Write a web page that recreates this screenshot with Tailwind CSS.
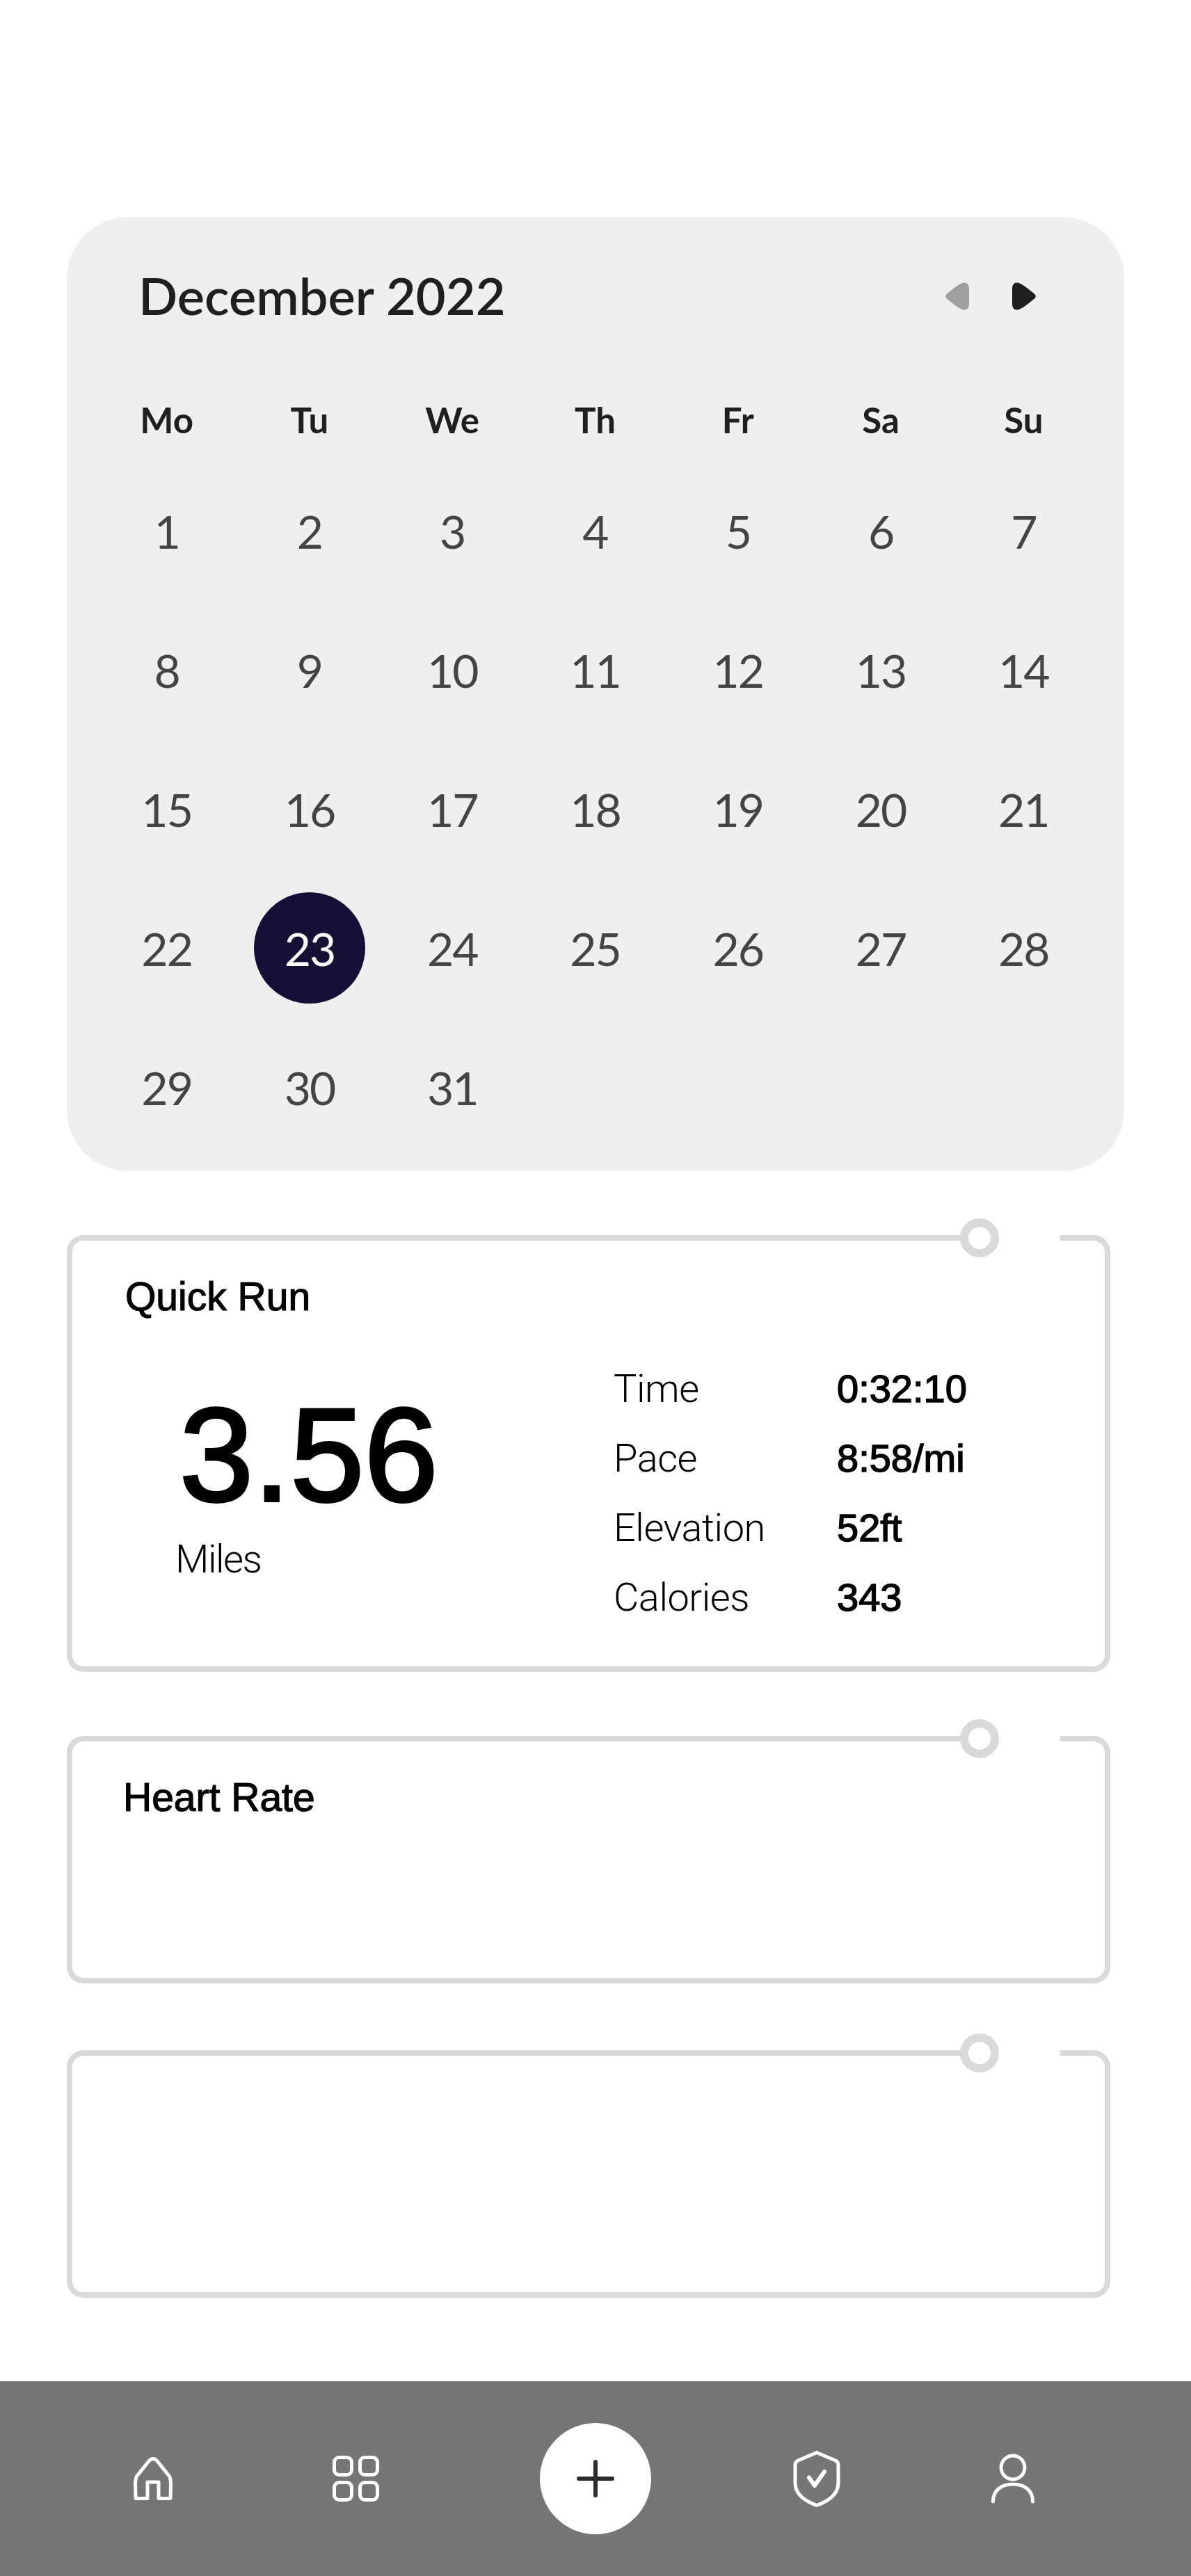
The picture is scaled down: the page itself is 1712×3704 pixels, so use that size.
<!DOCTYPE html>
<html lang="en">
<head>
    <meta charset="UTF-8">
    <meta name="viewport" content="width=device-width, initial-scale=1.0">
    <title>Calendar</title>
    <script src="https://cdn.jsdelivr.net/npm/@tailwindcss/browser@4"></script>
</head>
<body class="bg-white h-[3704px] w-[1712px] overflow-hidden flex flex-col font-['Liberation_Sans',sans-serif]">
    <main class="flex-1 pt-[312px] pl-[96px]">
        <!-- calendar -->
        <section class="w-[1520px] h-[1372px] bg-[#efefef] rounded-[88px] pl-[41px] pr-[42px] font-['Lato',sans-serif]">
            <div class="h-[226px] pt-[70px] flex items-start justify-between">
                <h2 class="pl-[62px] h-[86px] leading-[86px] text-[74px] font-semibold text-[#1f1f1f]">December 2022</h2>
                <div class="flex mt-[24px] mr-[85px] gap-[62px]">
                    <svg width="34" height="40" viewBox="0 0 34 40"><path d="M27 0.5C31 0.5 34 3 34 9V31C34 37 31 39.5 27 39.5C23 39.5 16 35 4 25C-1 21.5 -1 18.5 4 15C16 5 23 0.5 27 0.5Z" fill="#9f9f9f"/></svg>
                    <svg width="34" height="40" viewBox="0 0 34 40"><path d="M7 0.5C3 0.5 0 3 0 9V31C0 37 3 39.5 7 39.5C11 39.5 18 35 30 25C35 21.5 35 18.5 30 15C18 5 11 0.5 7 0.5Z" fill="#1f1f1f"/></svg>
                </div>
            </div>
            <div class="grid grid-cols-7 h-[127px] items-start text-center text-[51px] leading-[132px] font-bold text-[#1f1f1f]">
                <div>Mo</div><div>Tu</div><div>We</div><div>Th</div><div>Fr</div><div>Sa</div><div>Su</div>
            </div>
            <div class="grid grid-cols-7 auto-rows-[200px] -mt-[2px] items-center justify-items-center text-[66px] tracking-[-2px] text-[#444444]">
                <div>1</div><div>2</div><div>3</div><div>4</div><div>5</div><div>6</div><div>7</div>
                <div>8</div><div>9</div><div>10</div><div>11</div><div>12</div><div>13</div><div>14</div>
                <div>15</div><div>16</div><div>17</div><div>18</div><div>19</div><div>20</div><div>21</div>
                <div>22</div><div class="w-[160px] h-[160px] rounded-full bg-[#170f35] text-white flex items-center justify-center">23</div><div>24</div><div>25</div><div>26</div><div>27</div><div>28</div>
                <div>29</div><div>30</div><div>31</div>
            </div>
        </section>

        <!-- quick run -->
        <section class="relative w-[1500px] h-[628px] mt-[92px] border-[8px] border-[#d9d9d9] rounded-[24px]">
            <div class="absolute left-[1300px] -top-[8px] w-[120px] h-[8px] bg-white"></div>
            <div class="absolute left-[1276px] -top-[32px] w-[56px] h-[56px] rounded-full border-[12px] border-[#d9d9d9] bg-white"></div>
            <h3 class="pl-[76px] pt-[47px] text-[57px] leading-[66px] text-black [-webkit-text-stroke:1.2px_black]">Quick Run</h3>
            <div class="flex">
                <div class="w-[780px] pl-[154px]">
                    <div class="mt-[85px] text-[191px] leading-[220px] text-black [-webkit-text-stroke:4px_black]">3.56</div>
                    <div class="-ml-[6px] mt-[7px] text-[56px] leading-[66px] font-['Roboto',sans-serif] font-light text-black tracking-[-1.5px]">Miles</div>
                </div>
                <dl class="mt-[50px] -ml-[2px] grid grid-cols-[321px_1fr] auto-rows-[100px] text-[56px] leading-[100px] text-black">
                    <dt class="font-['Roboto',sans-serif] font-light tracking-[-0.5px]">Time</dt><dd class="[-webkit-text-stroke:1.5px_black]">0:32:10</dd>
                    <dt class="font-['Roboto',sans-serif] font-light tracking-[-0.5px]">Pace</dt><dd class="[-webkit-text-stroke:1.5px_black]">8:58/mi</dd>
                    <dt class="font-['Roboto',sans-serif] font-light tracking-[-0.5px]">Elevation</dt><dd class="[-webkit-text-stroke:1.5px_black]">52ft</dd>
                    <dt class="font-['Roboto',sans-serif] font-light tracking-[-0.5px]">Calories</dt><dd class="[-webkit-text-stroke:1.5px_black]">343</dd>
                </dl>
            </div>
        </section>

        <!-- heart rate -->
        <section class="relative w-[1500px] h-[356px] mt-[92px] border-[8px] border-[#d9d9d9] rounded-[24px]">
            <div class="absolute left-[1300px] -top-[8px] w-[120px] h-[8px] bg-white"></div>
            <div class="absolute left-[1276px] -top-[32px] w-[56px] h-[56px] rounded-full border-[12px] border-[#d9d9d9] bg-white"></div>
            <h3 class="pl-[73px] pt-[47px] text-[57px] leading-[66px] text-black [-webkit-text-stroke:1.2px_black]">Heart Rate</h3>
        </section>

        <section class="relative w-[1500px] h-[356px] mt-[96px] border-[8px] border-[#d9d9d9] rounded-[24px]">
            <div class="absolute left-[1300px] -top-[8px] w-[120px] h-[8px] bg-white"></div>
            <div class="absolute left-[1276px] -top-[32px] w-[56px] h-[56px] rounded-full border-[12px] border-[#d9d9d9] bg-white"></div>
        </section>
    </main>

    <!-- bottom nav -->
    <nav class="h-[280px] bg-[#757575] flex items-center pl-[192px]">
        <svg width="56" height="62" viewBox="0 0 56 62" fill="none" stroke="white" stroke-width="5" stroke-linejoin="round">
            <path d="M28 2.5C25 2.5 23 4 21 7L5 27C3 29 3 32 2.5 38L3 59.5H20V36H36V59.5H53L53.5 38C53 32 53 29 51 27L35 7C33 4 31 2.5 28 2.5Z"/>
        </svg>
        <svg class="ml-[230px]" width="67" height="66" viewBox="0 0 67 66" fill="none" stroke="white" stroke-width="5">
            <rect x="2.5" y="2.5" width="25" height="25" rx="7"/>
            <rect x="39.5" y="2.5" width="25" height="25" rx="7"/>
            <rect x="2.5" y="38.5" width="25" height="25" rx="7"/>
            <rect x="39.5" y="38.5" width="25" height="25" rx="7"/>
        </svg>
        <div class="ml-[231px] w-[160px] h-[160px] rounded-full bg-white flex items-center justify-center">
            <svg width="54" height="54" viewBox="0 0 54 54" fill="none" stroke="#2b2d33" stroke-width="6" stroke-linecap="round">
                <path d="M3 27H51M27 3V51"/>
            </svg>
        </div>
        <svg class="ml-[204px]" width="68" height="81" viewBox="0 0 68 81" fill="none" stroke="white" stroke-width="5" stroke-linejoin="round" stroke-linecap="round">
            <path d="M34 2.5L7 14C4 15.5 3 17 3 20V46C3 62 16 72 34 78.5C52 72 65 62 65 46V20C65 17 64 15.5 61 14Z"/>
            <path d="M23 38.5L31 50L45 30" stroke-width="6"/>
        </svg>
        <svg class="ml-[217px]" width="62" height="72" viewBox="0 0 62 72" fill="none" stroke="white" stroke-width="5" stroke-linecap="round">
            <circle cx="31" cy="20" r="17"/>
            <path d="M2.5 69C2.5 53 14 44 31 44C48 44 59.5 53 59.5 69"/>
        </svg>
    </nav>
</body>
</html>
